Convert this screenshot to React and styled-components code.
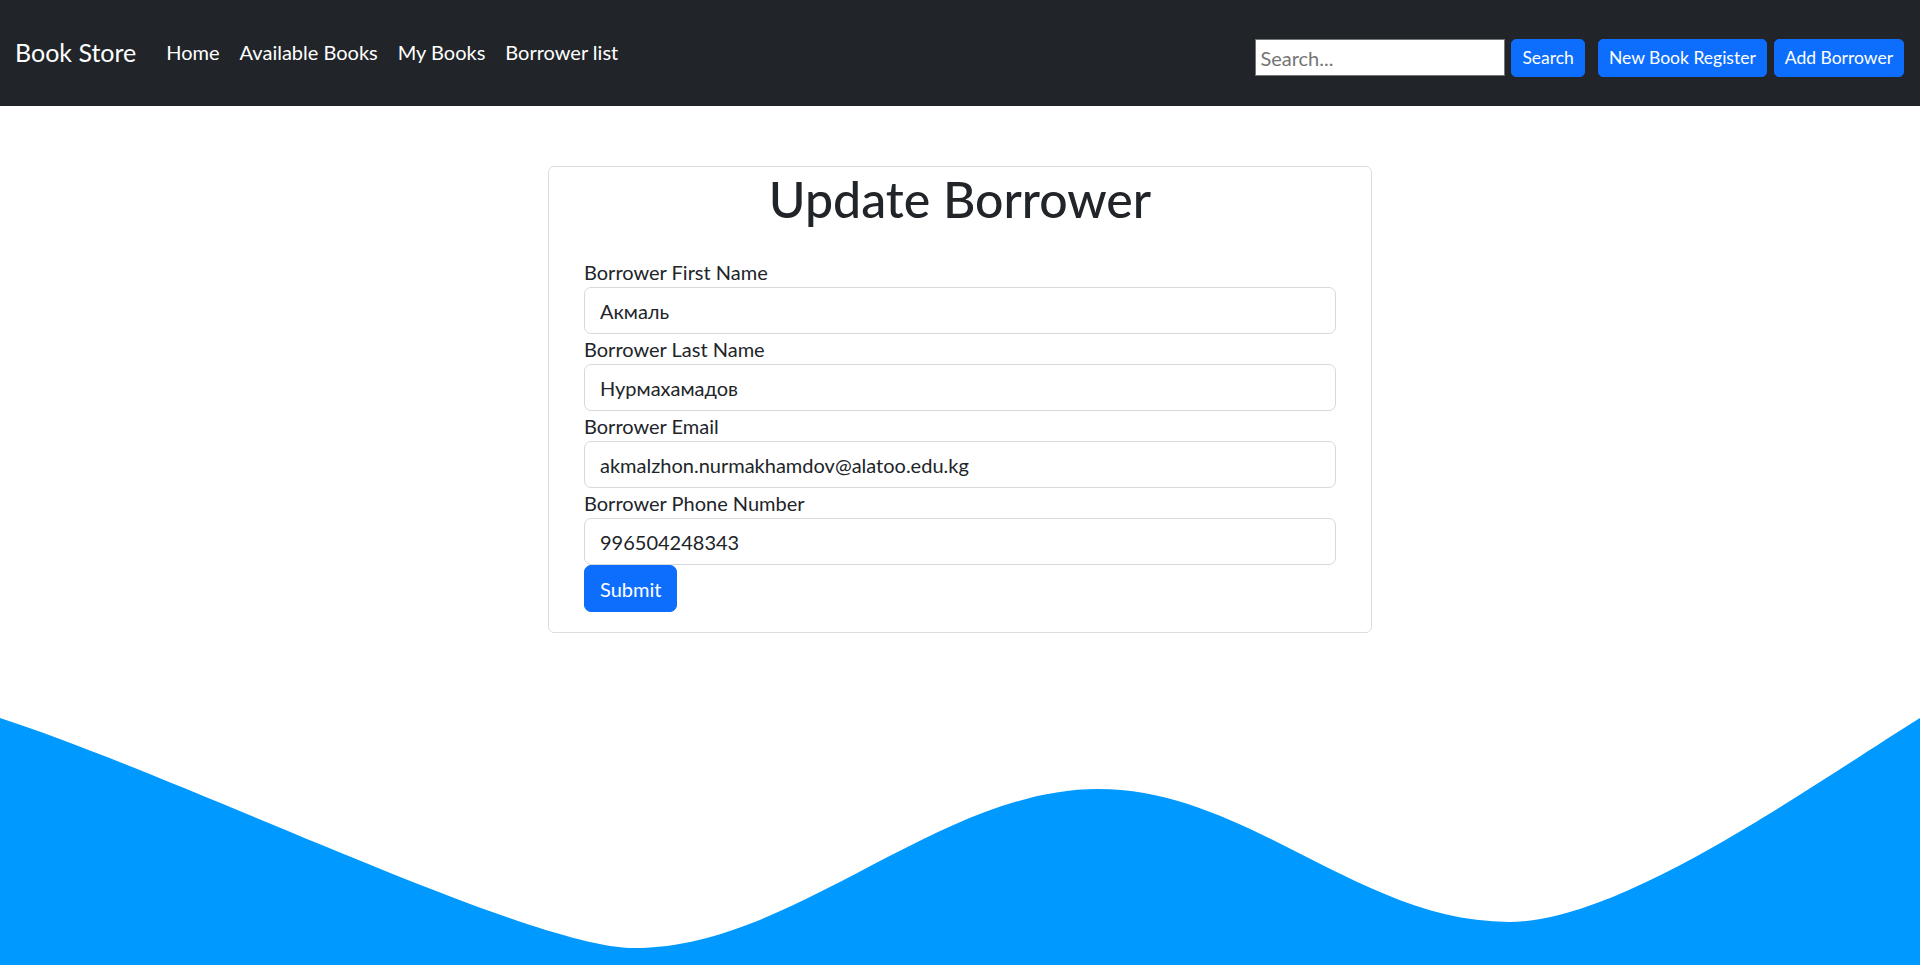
import React from 'react'
import styled, { createGlobalStyle } from 'styled-components'

const GlobalStyle = createGlobalStyle`
  * {
    box-sizing: border-box;
  }
  body {
    margin: 0;
    font-family: Lato, 'Open Sans', sans-serif;
    color: #212529;
    background: #fff;
  }
`

const Page = styled.div`
  min-height: 100vh;
  display: flex;
  flex-direction: column;
`

const Navbar = styled.nav`
  height: 106px;
  background: #212529;
  display: flex;
  align-items: center;
  justify-content: space-between;
  padding: 0 16px 0 15px;
`

const NavLeft = styled.div`
  display: flex;
  align-items: center;
  margin-top: -2px;
`

const Brand = styled.a`
  font-size: 25px;
  line-height: 37px;
  color: #fff;
  margin-right: 20px;
  text-decoration: none;
`

const NavLink = styled.a`
  font-size: 20px;
  line-height: 30px;
  color: #fff;
  padding: 0 10px;
  text-decoration: none;
`

const NavRight = styled.div`
  display: flex;
  align-items: center;
  padding-top: 9px;
`

const SearchForm = styled.form`
  display: flex;
  align-items: center;
  gap: 6px;
  margin-right: 13px;
`

const SearchInput = styled.input`
  width: 250px;
  height: 37px;
  border: 1px solid #767676;
  border-radius: 0;
  padding: 0 4px;
  font-family: Lato, sans-serif;
  font-size: 20px;
  color: #212529;
  background: #fff;

  &::placeholder {
    color: #757575;
  }
`

const SmallButton = styled.button`
  height: 38px;
  padding: 0 10px;
  margin-left: ${({ $gap }) => $gap || 0}px;
  background: #0d6efd;
  border: 1px solid #0d6efd;
  border-radius: 5px;
  color: #fff;
  font-family: Lato, sans-serif;
  font-size: 17.5px;
  cursor: pointer;
`

const Main = styled.main`
  display: flex;
  justify-content: center;
  padding-top: 60px;
`

const Card = styled.div`
  width: 824px;
  border: 1px solid #dcdddf;
  border-radius: 6px;
  padding: 0 35px 20px;
`

const Title = styled.h1`
  margin: 2px 0 28px;
  font-size: 50px;
  line-height: 60px;
  font-weight: 500;
  text-align: center;
`

const Label = styled.label`
  display: block;
  font-size: 20px;
  line-height: 30px;
`

const Input = styled.input`
  display: block;
  width: 100%;
  height: 47px;
  padding: 0 15px;
  border: 1px solid #d6d9dd;
  border-radius: 7px;
  font-family: Lato, sans-serif;
  font-size: 20px;
  color: #212529;
  background: #fff;
`

const SubmitButton = styled.button`
  height: 47px;
  padding: 0 15px;
  background: #0d6efd;
  border: 1px solid #0d6efd;
  border-radius: 7px;
  color: #fff;
  font-family: Lato, sans-serif;
  font-size: 20px;
  cursor: pointer;
`

const WaveWrap = styled.div`
  margin-top: auto;
  height: 247px;
  line-height: 0;

  svg {
    width: 100%;
    height: 100%;
    display: block;
  }
`

const fields = [
  { label: 'Borrower First Name', value: 'Акмаль' },
  { label: 'Borrower Last Name', value: 'Нурмахамадов' },
  { label: 'Borrower Email', value: 'akmalzhon.nurmakhamdov@alatoo.edu.kg' },
  { label: 'Borrower Phone Number', value: '996504248343' },
]

const Wave = () => (
  <WaveWrap>
    <svg viewBox="0 0 1920 247" preserveAspectRatio="none">
      <path
        fill="#0099ff"
        d="M0,0 C190,62 530,230 634,230 C794,230 938,71 1098,71 C1248,71 1359,204 1509,204 C1620,204 1800,75 1920,0 L1920,247 L0,247 Z"
      />
    </svg>
  </WaveWrap>
)

const App = () => {
  return (
    <Page>
      <GlobalStyle />
      <Navbar>
        <NavLeft>
          <Brand href="#">Book Store</Brand>
          <NavLink href="#">Home</NavLink>
          <NavLink href="#">Available Books</NavLink>
          <NavLink href="#">My Books</NavLink>
          <NavLink href="#">Borrower list</NavLink>
        </NavLeft>
        <NavRight>
          <SearchForm onSubmit={(e) => e.preventDefault()}>
            <SearchInput type="text" placeholder="Search..." />
            <SmallButton type="submit">Search</SmallButton>
          </SearchForm>
          <SmallButton>New Book Register</SmallButton>
          <SmallButton $gap={7}>Add Borrower</SmallButton>
        </NavRight>
      </Navbar>

      <Main>
        <Card>
          <Title>Update Borrower</Title>
          <form onSubmit={(e) => e.preventDefault()}>
            {fields.map((f) => (
              <div key={f.label}>
                <Label>{f.label}</Label>
                <Input type="text" defaultValue={f.value} />
              </div>
            ))}
            <SubmitButton type="submit">Submit</SubmitButton>
          </form>
        </Card>
      </Main>

      <Wave />
    </Page>
  )
}

export default App
